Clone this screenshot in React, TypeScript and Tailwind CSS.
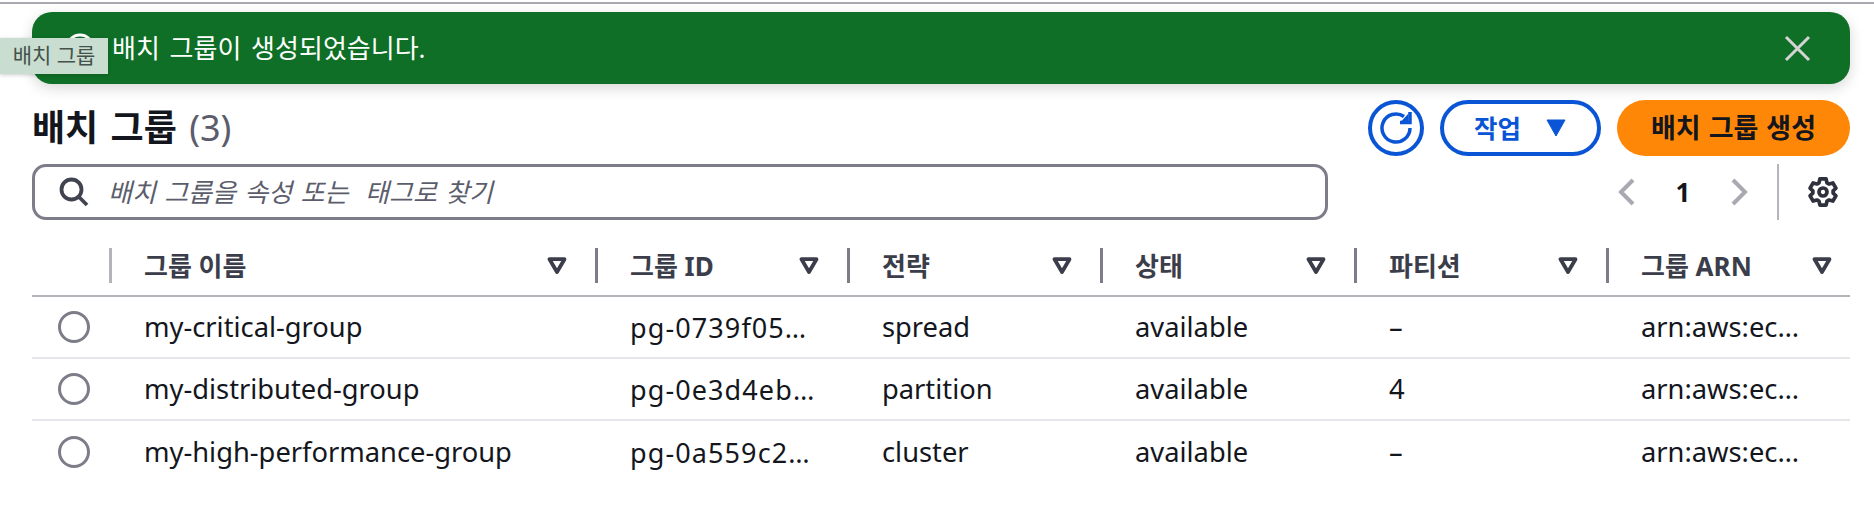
const columns = [
  { label: '그룹 이름', divider: 'bg-[#b4b4bb]', pad: 'pr-[28px]' },
  { label: '그룹 ID', divider: 'bg-[#7d7d8a]', pad: 'pr-[28px]' },
  { label: '전략', divider: 'bg-[#7d7d8a]', pad: 'pr-[28px]' },
  { label: '상태', divider: 'bg-[#7d7d8a]', pad: 'pr-[28px]' },
  { label: '파티션', divider: 'bg-[#7d7d8a]', pad: 'pr-[28px]' },
  { label: '그룹 ARN', divider: 'bg-[#7d7d8a]', pad: 'pr-[18px]' },
];

const rows = [
  ['my-critical-group', 'pg-0739f05…', 'spread', 'available', '–', 'arn:aws:ec…'],
  ['my-distributed-group', 'pg-0e3d4eb…', 'partition', 'available', '4', 'arn:aws:ec…'],
  ['my-high-performance-group', 'pg-0a559c2…', 'cluster', 'available', '–', 'arn:aws:ec…'],
];

const gridCols = 'grid grid-cols-[77px_486px_252px_253px_254px_252px_244px]';

function SortIcon() {
  return (
    <svg width="20" height="17" viewBox="0 0 20 17" className="shrink-0">
      <path d="M2.5 2.2h15L10 15z" fill="none" stroke="#3b3e4a" strokeWidth="3.8" strokeLinejoin="round" />
    </svg>
  );
}

function Radio() {
  return <div className="h-8 w-8 rounded-full border-[3px] border-[#7d7d8a] bg-white" />;
}

export default function App() {
  return (
    <div className="relative min-h-[516px] bg-white font-['Noto_Sans','Noto_Sans_CJK_KR',sans-serif] text-[#14161d]">
      <div className="pt-[2px]">
        <div className="h-[2px] bg-[#a9a9b2]" />
      </div>

      <div className="pl-8 pr-6">
        <div className="mt-2 flex h-[72px] items-center rounded-[20px] bg-[#0f6f26] pl-[32px] pr-[39px] text-white shadow-[0_4px_14px_rgba(0,0,0,0.16)]">
          <svg width="32" height="32" viewBox="0 0 32 32" className="shrink-0">
            <circle cx="16" cy="16" r="13" fill="none" stroke="white" strokeWidth="3" />
          </svg>
          <span className="ml-[16px] text-[26px] leading-none [word-spacing:3px]">배치 그룹이 생성되었습니다.</span>
          <svg width="27" height="27" viewBox="0 0 27 27" className="ml-auto shrink-0">
            <path d="M2 2l23 23M25 2L2 25" stroke="#d5d5d5" strokeWidth="3" />
          </svg>
        </div>

        <div className="mt-4 flex h-14 items-center">
          <h1 className="text-[36px] font-bold leading-none [word-spacing:3px]">
            배치 그룹 <span className="font-normal text-[#5b5d6c]">(3)</span>
          </h1>
          <div className="ml-auto flex gap-4">
            <button className="flex h-14 w-14 items-center justify-center rounded-full border-[4px] border-[#0a55d6]">
              <svg width="34" height="34" viewBox="0 0 34 34" fill="none" stroke="#0a55d6" strokeWidth="3.5">
                <path d="M31 17A14 14 0 1 1 25 5.5" />
                <path d="M31 1V11.5H21" />
                <path d="M29.5 2.5L22.5 10H29.5z" fill="#0a55d6" stroke="none" />
              </svg>
            </button>
            <button className="flex h-14 w-[161px] items-center justify-center gap-6 rounded-full border-[4px] border-[#0a55d6] text-[25.5px] font-bold text-[#0a55d6]">
              작업
              <svg width="22" height="18" viewBox="0 0 22 18">
                <path d="M2 1h18L11 17z" fill="#0a55d6" stroke="#0a55d6" strokeLinejoin="round" />
              </svg>
            </button>
            <button className="h-14 w-[233px] rounded-full bg-[#ff8708] text-[27px] font-bold [word-spacing:1px]">배치 그룹 생성</button>
          </div>
        </div>

        <div className="mt-2 flex h-14 items-center">
          <div className="flex h-14 w-[1296px] items-center rounded-[14px] border-[3px] border-[#7d7d8a] pl-[23px]">
            <svg width="32" height="32" viewBox="0 0 32 32" fill="none" stroke="#414450" strokeWidth="3.8" className="shrink-0">
              <circle cx="13.5" cy="13.5" r="10" />
              <path d="M21 21l8 8" />
            </svg>
            <span className="ml-[18px] whitespace-pre text-[26px] italic leading-none text-[#5b5d6c] [word-spacing:1.6px]">배치 그룹을 속성 또는  태그로 찾기</span>
          </div>
          <svg width="18" height="28" viewBox="0 0 18 28" fill="none" stroke="#a9a9b2" strokeWidth="4" className="ml-[290px] shrink-0">
            <path d="M15 2L3 14l12 12" />
          </svg>
          <span className="ml-[38px] w-[18px] text-center text-[26px] font-bold leading-none">1</span>
          <svg width="18" height="28" viewBox="0 0 18 28" fill="none" stroke="#a9a9b2" strokeWidth="4" className="ml-[38px] shrink-0">
            <path d="M3 2l12 12L3 26" />
          </svg>
          <div className="ml-[29px] h-14 w-[2px] bg-[#b4b4bb]" />
          <svg width="32" height="34" viewBox="0 0 24 24" fill="none" stroke="#2f323d" strokeWidth="2.8" strokeLinejoin="round" className="ml-[28px] shrink-0">
            <path d="M9.7 2.2h4.6l.7 2.9 1.6.9 2.8-.8 2.3 4-2.1 2v1.6l2.1 2-2.3 4-2.8-.8-1.6.9-.7 2.9H9.7L9 18.9l-1.6-.9-2.8.8-2.3-4 2.1-2v-1.6l-2.1-2 2.3-4 2.8.8L9 5.1z" />
            <circle cx="12" cy="12" r="3" />
          </svg>
        </div>

        <div className="mt-7">
          <div className={`${gridCols} border-b-2 border-[#b4b4bb] pb-3`}>
            <div />
            {columns.map((col) => (
              <div key={col.label} className={`flex h-[35px] items-center ${col.pad}`}>
                <div className={`h-[35px] w-[3px] shrink-0 ${col.divider}`} />
                <span className="ml-[32px] text-[26px] font-bold leading-none text-[#3b3e4a]">{col.label}</span>
                <span className="ml-auto">
                  <SortIcon />
                </span>
              </div>
            ))}
          </div>
          {rows.map((row, i) => (
            <div
              key={row[0]}
              className={`${gridCols} h-[62px] items-center ${i < rows.length - 1 ? 'border-b-2 border-[#e6e6ea]' : ''}`}
            >
              <div className="pl-[26px]">
                <Radio />
              </div>
              {row.map((cell, j) => (
                <div
                  key={j}
                  className={`whitespace-nowrap pl-[35px] leading-none ${j === 1 ? 'text-[27px] tracking-[1.1px]' : 'text-[27.3px]'}`}
                >
                  {cell}
                </div>
              ))}
            </div>
          ))}
        </div>
      </div>

      <div className="absolute left-0 top-[38px] flex h-[36px] w-[108px] items-center justify-center bg-[#c9ddd1] text-[21px] text-[#44524a] shadow-[0_1px_4px_rgba(0,0,0,0.2)]">
        배치 그룹
      </div>
    </div>
  );
}
